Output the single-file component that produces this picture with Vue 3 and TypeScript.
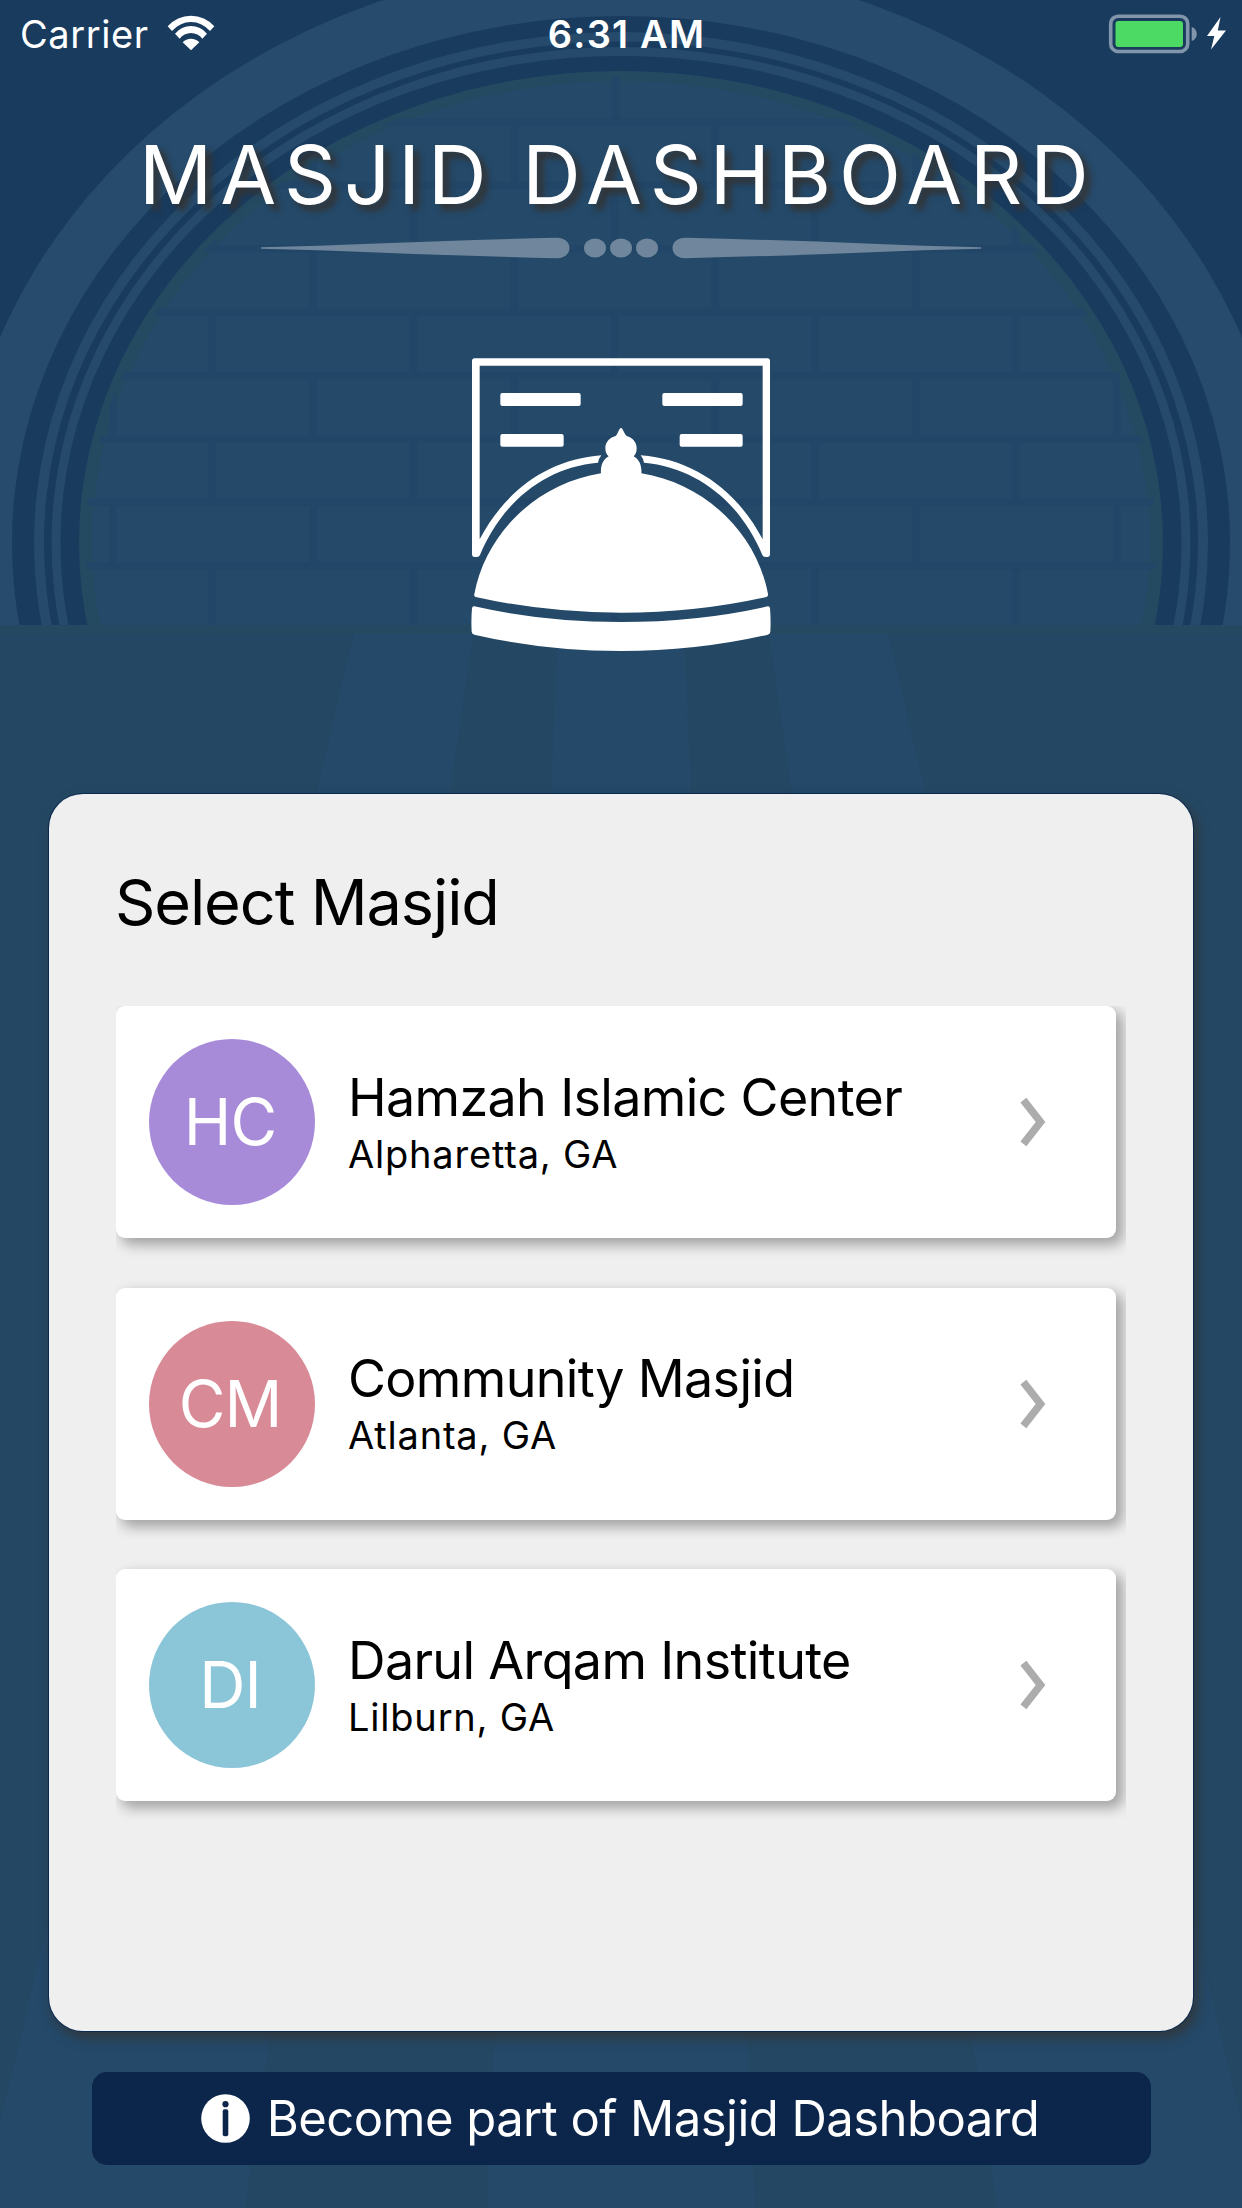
<script setup lang="ts">
interface Masjid {
  initials: string
  name: string
  place: string
  color: string
}

const masjids: Masjid[] = [
  { initials: 'HC', name: 'Hamzah Islamic Center', place: 'Alpharetta, GA', color: '#a78bd9' },
  { initials: 'CM', name: 'Community Masjid', place: 'Atlanta, GA', color: '#d88a96' },
  { initials: 'DI', name: 'Darul Arqam Institute', place: 'Lilburn, GA', color: '#8bc5d8' },
]

// Concentric bands of the arch, from the outside in
const arch = [
  { rx: 664, ry: 581.5, fill: '#264b6c' },
  { rx: 609, ry: 527, fill: '#183b5e' },
  { rx: 587, ry: 511, fill: '#254a6b' },
  { rx: 577, ry: 501.4, fill: '#183b5e' },
  { rx: 569.5, ry: 496, fill: '#254a6b' },
  { rx: 560.5, ry: 487, fill: '#183b5e' },
  { rx: 542, ry: 472, fill: '#244a62' },
  { rx: 529, ry: 462, fill: '#244969' },
]

// Horizontal joints, and the vertical joints of each course between them
const joints = [118.5, 181.5, 245, 308.5, 372, 435.5, 498.5, 562]
const courses = joints.flatMap((y, row) => {
  const first = row % 2 === 0 ? 109 : 8
  return Array.from({ length: 7 }, (_, i) => ({ x: first + i * 200.8, y: y + 7 }))
})
</script>

<template>
  <main class="screen">
    <svg class="backdrop" width="1242" height="2208" viewBox="0 0 1242 2208" aria-hidden="true">
      <defs>
        <clipPath id="wall"><rect width="1242" height="626" /></clipPath>
        <clipPath id="bricks"><ellipse cx="621" cy="543" rx="535" ry="466" /></clipPath>
      </defs>
      <rect width="1242" height="2208" fill="#183b5e" />
      <g clip-path="url(#wall)">
        <ellipse v-for="band in arch" :key="band.rx" cx="621" cy="543" :rx="band.rx" :ry="band.ry" :fill="band.fill" />
        <g clip-path="url(#bricks)" fill="#224667">
          <rect v-for="y in joints" :key="y" x="60" :y="y" width="1122" height="7.5" />
          <rect x="612" y="70" width="7.5" height="50" />
          <rect v-for="(c, i) in courses" :key="i" :x="c.x" :y="c.y" width="7.5" height="57" />
        </g>
      </g>
      <rect y="625" width="1242" height="1583" fill="#244864" />
      <rect y="625" width="1242" height="9" fill="#244961" />
      <g fill="#244969">
        <path d="M354 634H473L245 2208H-20Z" />
        <path d="M558 634H684L755 2208H487Z" />
        <path d="M769 634H888L1262 2208H997Z" />
      </g>
    </svg>

    <header class="status">
      <div class="network">
        <span>Carrier</span>
        <svg class="wifi" width="48" height="36" viewBox="20 31 144 108" fill="#fff">
          <path d="M22 65A92.6 92.6 0 0 1 162 65L149 79A74.3 74.3 0 0 0 35 79Z" />
          <path d="M44 87A62 62 0 0 1 140 87L126 102A42 42 0 0 0 58 102Z" />
          <path d="M67 113A34 34 0 0 1 117 113L92 137Z" />
        </svg>
      </div>
      <span class="time">6:31 AM</span>
      <svg class="battery" width="120" height="44" viewBox="1108 12 120 44">
        <rect x="1110.7" y="16.2" width="77" height="35.3" rx="7.5" fill="none" stroke="#8296ab" stroke-width="3.6" />
        <rect x="1115.5" y="21" width="67.5" height="26" rx="3" fill="#4cd964" />
        <path d="M1191.7 27C1198.5 29 1198.5 39 1191.7 41Z" fill="#8296ab" />
        <path d="M1220.5 17L1207 36H1214.3L1211 49.5L1226 30.5H1217.8Z" fill="#fff" />
      </svg>
    </header>

    <h1 class="title">MASJID DASHBOARD</h1>

    <svg class="divider" width="724" height="22" viewBox="259 237 724 22" fill="#6f869c">
      <path d="M261 247.3Q320 245.8 370 243.8Q460 240 556 237.8C574 237 574 259 556 258.2Q460 256 370 252.2Q320 250 261 248.7Z" />
      <ellipse cx="595" cy="248" rx="11" ry="9.6" />
      <ellipse cx="621" cy="248" rx="11" ry="9.6" />
      <ellipse cx="647" cy="248" rx="11" ry="9.6" />
      <path d="M981 247.3Q922 245.8 872 243.8Q782 240 686 237.8C668 237 668 259 686 258.2Q782 256 872 252.2Q922 250 981 248.7Z" />
    </svg>

    <svg class="logo" width="360" height="340" viewBox="0 0 1080 1020" fill="#fff">
      <path fill-rule="evenodd" d="M104 85H982Q990 85 990 93V672Q990 681 982 681H976Q970 681 967 675C900 515 770 412 612 398Q610 386 602 376C760 388 890 480 968 628V107H119V628C197 480 325 388 484 376Q476 386 474 398C315 412 187 515 120 675Q117 681 111 681H104Q96 681 96 672V93Q96 85 104 85Z" />
      <rect x="181" y="189" width="241" height="39" rx="6" />
      <rect x="667" y="189" width="241" height="39" rx="6" />
      <rect x="181" y="312" width="190" height="38" rx="6" />
      <rect x="719" y="312" width="189" height="38" rx="6" />
      <path d="M543 294C549 294 550 308 560 318C578 322 590 338 590 354Q590 370 581 379C598 388 606 408 604 430C800 462 950 612 984 792Q985 799 979 801Q770 848 543 848T107 801Q101 799 103 792C137 612 286 462 483 430C481 408 489 388 506 379Q496 370 496 354C496 338 508 322 527 318C536 308 537 294 543 294Z" />
      <path d="M103 829Q310 876 543 876T983 829Q989 828 990 835Q993 870 991 905Q990 912 983 914Q770 963 543 963T103 914Q96 912 95 905Q93 870 96 835Q97 828 103 829Z" />
    </svg>

    <section class="panel">
      <h2 class="heading">Select Masjid</h2>
      <ul class="list">
        <li v-for="m in masjids" :key="m.initials" class="item">
          <span class="avatar" :style="{ backgroundColor: m.color }">{{ m.initials }}</span>
          <div class="details">
            <span class="name">{{ m.name }}</span>
            <span class="place">{{ m.place }}</span>
          </div>
          <svg class="chevron" width="26" height="50" viewBox="0 0 26 50">
            <path d="M3.4 3.2L20.5 25L3.4 46.8" fill="none" stroke="#acacac" stroke-width="7.6" />
          </svg>
        </li>
      </ul>
    </section>

    <button class="join" type="button">
      <svg width="49" height="49" viewBox="0 0 49 49">
        <circle cx="24.5" cy="24.5" r="24.3" fill="#fff" />
        <circle cx="24.5" cy="10.2" r="3.1" fill="#0c254a" />
        <rect x="21.7" y="15.3" width="5.6" height="27" rx="2" fill="#0c254a" />
      </svg>
      <span>Become part of Masjid Dashboard</span>
    </button>
  </main>
</template>

<style>
body {
  margin: 0;
  background: #183b5e;
}
</style>

<style scoped>
.screen {
  position: relative;
  isolation: isolate;
  display: flex;
  flex-direction: column;
  width: 1242px;
  height: 2208px;
  overflow: hidden;
  font-family: Inter, "Liberation Sans", sans-serif;
  color: #fff;
}

.backdrop {
  position: absolute;
  inset: 0;
  z-index: -1;
}

.status {
  box-sizing: border-box;
  display: grid;
  grid-template-columns: 1fr auto 1fr;
  align-items: center;
  height: 70px;
  padding: 0 14px 2px 20px;
  font-size: 38px;
  line-height: 68px;
}

.network {
  display: flex;
  align-items: center;
  gap: 18px;
  letter-spacing: 0.6px;
}

.wifi {
  margin-bottom: 2px;
}

.time {
  padding-left: 5px;
  font-weight: 600;
  letter-spacing: 1.2px;
}

.battery {
  justify-self: end;
}

.title {
  margin: 55px 0 0 139px;
  font-size: 81px;
  font-weight: 400;
  line-height: 100px;
  letter-spacing: 8px;
  word-spacing: -3px;
  white-space: nowrap;
  text-shadow: 6px 6px 6px #333;
}

.divider {
  align-self: center;
  margin-top: 12px;
}

.logo {
  margin: 71px 0 0 440px;
}

.panel {
  box-sizing: border-box;
  display: flex;
  flex-direction: column;
  width: 1144px;
  height: 1237px;
  margin: 124px 0 0 49px;
  padding: 70px 67px 60px;
  border-radius: 34px;
  background: #efefef;
  color: #000;
  box-shadow: 0 0 0 1px #082a4f, 4px 6px 12px 1px rgba(51, 51, 51, 0.8);
}

.heading {
  margin: 0 0 66px -1px;
  font-size: 63px;
  font-weight: 400;
  line-height: 76px;
  letter-spacing: -1.1px;
}

.list {
  flex: 1;
  display: flex;
  flex-direction: column;
  gap: 49.5px;
  margin: 0;
  padding: 0 10px 0 0;
  overflow: hidden;
  list-style: none;
}

.item {
  box-sizing: border-box;
  display: flex;
  align-items: center;
  flex: none;
  height: 232px;
  padding: 0 70px 0 33px;
  border-radius: 9px;
  background: #fff;
  box-shadow: 6px 6px 13px 1px rgba(0, 0, 0, 0.32);
}

.avatar {
  box-sizing: border-box;
  flex: none;
  width: 166px;
  height: 166px;
  padding-right: 4px;
  border-radius: 50%;
  color: #fff;
  font-size: 64px;
  font-weight: 400;
  line-height: 166px;
  letter-spacing: -1px;
  text-align: center;
}

.details {
  flex: 1;
  display: flex;
  flex-direction: column;
  padding: 4px 0 0 33px;
}

.name {
  font-size: 52px;
  line-height: 60px;
  letter-spacing: -0.65px;
}

.place {
  font-size: 38px;
  line-height: 53px;
  letter-spacing: 0.8px;
}

.join {
  display: flex;
  align-items: center;
  justify-content: center;
  gap: 17px;
  height: 93px;
  margin: 41px 91.5px 0;
  padding: 0 2px 0 0;
  border: 0;
  border-radius: 15px;
  background: #0c254a;
  color: #fff;
  font: 400 49px/93px Inter, "Liberation Sans", sans-serif;
  letter-spacing: -0.55px;
  white-space: nowrap;
}
</style>
